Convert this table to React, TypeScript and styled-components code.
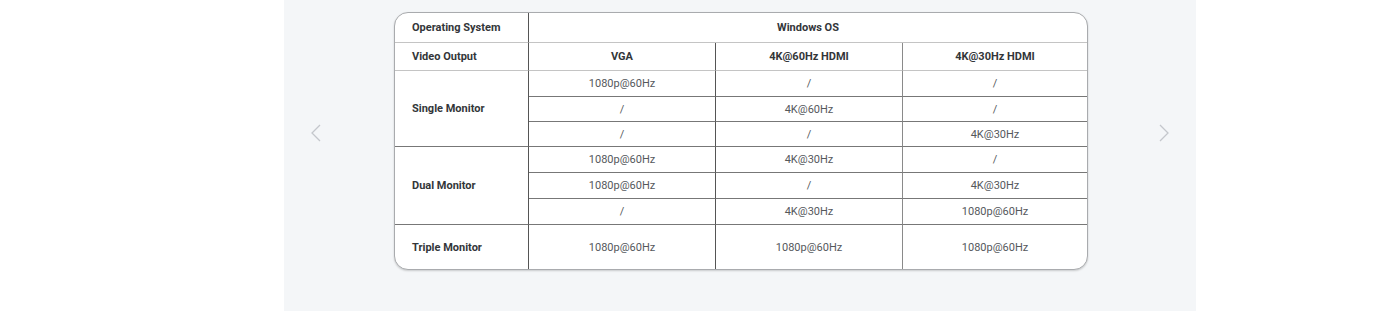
import React from "react";
import styled, { createGlobalStyle } from "styled-components";

const GlobalStyle = createGlobalStyle`
	html, body {
		margin: 0;
		padding: 0;
		background: #ffffff;
		font-family: Roboto, "Liberation Sans", sans-serif;
	}
`;

type Row = { label?: string; span?: number; cells: string[]; height: number };

const rows: Row[] = [
	{ label: "Single Monitor", span: 3, cells: ["1080p@60Hz", "/", "/"], height: 26 },
	{ cells: ["/", "4K@60Hz", "/"], height: 25 },
	{ cells: ["/", "/", "4K@30Hz"], height: 25 },
	{ label: "Dual Monitor", span: 3, cells: ["1080p@60Hz", "4K@30Hz", "/"], height: 26 },
	{ cells: ["1080p@60Hz", "/", "4K@30Hz"], height: 26 },
	{ cells: ["/", "4K@30Hz", "1080p@60Hz"], height: 26 },
	{ label: "Triple Monitor", span: 1, cells: ["1080p@60Hz", "1080p@60Hz", "1080p@60Hz"], height: 44 },
];

const Chevron = ({ dir }: { dir: "left" | "right" }) => (
	<ArrowButton aria-label={dir === "left" ? "Previous" : "Next"}>
		<svg width="11" height="18" viewBox="0 0 11 18" fill="none">
			<path
				d={dir === "left" ? "M10 1 L2 9 L10 17" : "M1 1 L9 9 L1 17"}
				stroke="#c4c7cc"
				strokeWidth="1.3"
			/>
		</svg>
	</ArrowButton>
);

export default function App() {
	const heights = [30, 28, ...rows.map((r) => r.height)];
	return (
		<>
			<GlobalStyle />
			<Panel>
				<Chevron dir="left" />
				<TableBox style={{ gridTemplateRows: heights.map((h) => `${h}px`).join(" ") }}>
					<HeadCell $align="left">Operating System</HeadCell>
					<HeadCell $span={3} $last $soft>Windows OS</HeadCell>
					<HeadCell $align="left">Video Output</HeadCell>
					<HeadCell>VGA</HeadCell>
					<HeadCell $soft>4K@60Hz HDMI</HeadCell>
					<HeadCell $last>4K@30Hz HDMI</HeadCell>
					{rows.map((row, i) => (
						<React.Fragment key={i}>
							{row.label && (
								<LabelCell $rows={row.span ?? 1} $bottom={i === rows.length - 1}>
									{row.label}
								</LabelCell>
							)}
							{row.cells.map((c, j) => (
								<ValueCell key={j} $last={j === 2} $bottom={i === rows.length - 1} $soft={j === 1}>
									{c}
								</ValueCell>
							))}
						</React.Fragment>
					))}
				</TableBox>
				<Chevron dir="right" />
			</Panel>
		</>
	);
}

const Panel = styled.div`
	margin-left: 284px;
	width: 912px;
	height: 311px;
	box-sizing: border-box;
	background: #f4f6f8;
	padding: 12px 26px 0;
	display: flex;
	justify-content: space-between;
	align-items: flex-start;
`;

const ArrowButton = styled.button`
	border: none;
	background: none;
	padding: 0;
	margin-top: 112px;
	width: 11px;
	height: 18px;
	display: flex;
	cursor: pointer;
`;

const TableBox = styled.div`
	width: 694px;
	margin-left: 2px;
	box-sizing: border-box;
	display: grid;
	grid-template-columns: 134px 187px 187px 1fr;
	background: #ffffff;
	border: 1px solid #a9abae;
	border-radius: 14px;
	overflow: hidden;
	box-shadow: 0 1px 2px rgba(0, 0, 0, 0.18);
`;

const Cell = styled.div<{ $last?: boolean; $bottom?: boolean; $soft?: boolean }>`
	display: flex;
	align-items: center;
	justify-content: center;
	font-size: 11px;
	box-sizing: border-box;
	border-right: ${(p) => (p.$last ? "none" : `1px solid ${p.$soft ? "#8a8a8a" : "#555"}`)};
	border-bottom: ${(p) => (p.$bottom ? "none" : "1px solid #777")};
`;

const HeadCell = styled(Cell)<{ $span?: number; $align?: "left" }>`
	grid-column: span ${(p) => p.$span ?? 1};
	justify-content: ${(p) => (p.$align === "left" ? "flex-start" : "center")};
	padding-left: ${(p) => (p.$align === "left" ? "17px" : "0")};
	font-weight: 700;
	color: #333639;
	border-bottom: 1px solid #c4c4c4;
`;

const LabelCell = styled(Cell)<{ $rows: number }>`
	grid-row: span ${(p) => p.$rows};
	justify-content: flex-start;
	padding-left: 17px;
	font-weight: 700;
	color: #333639;
`;

const ValueCell = styled(Cell)`
	color: #55585c;
`;
